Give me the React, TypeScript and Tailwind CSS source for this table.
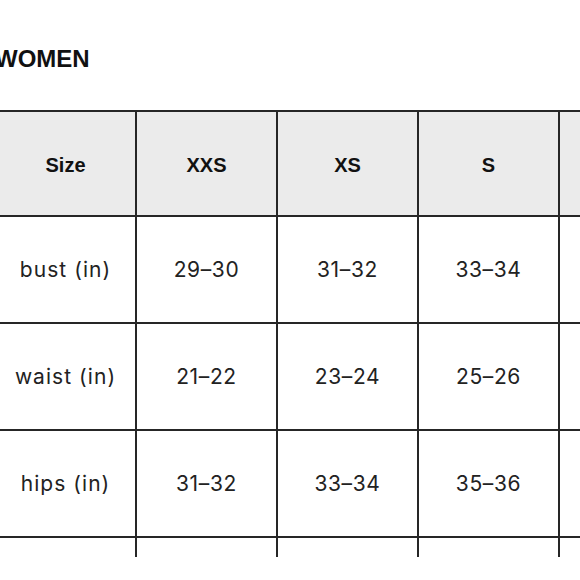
const SIZES = ["XXS", "XS", "S", "M", "L", "XL"];

const ROWS = [
  { label: "bust (in)", values: ["29–30", "31–32", "33–34", "35–36", "37–38", "39–40"] },
  { label: "waist (in)", values: ["21–22", "23–24", "25–26", "27–28", "29–30", "31–32"] },
  { label: "hips (in)", values: ["31–32", "33–34", "35–36", "37–38", "39–40", "41–42"] },
];

function Cell({ children, head }: { children?: React.ReactNode; head?: boolean }) {
  return (
    <div
      className={`w-[141px] shrink-0 h-full flex items-center justify-center border-r-2 border-[#262626] ${
        head ? "bg-[#ebebeb] pt-[3px]" : "bg-white"
      }`}
    >
      {children}
    </div>
  );
}

const headFont = { fontFamily: '"Liberation Sans", Arial, sans-serif', fontWeight: 700 };
const bodyFont = { fontFamily: "Inter, sans-serif" };

export default function App() {
  return (
    <div className="w-[580px] h-[580px] overflow-hidden bg-white">
      <div className="-ml-[4px]">
        <h2
          className="pt-[47px] -ml-[1px] text-[24px] leading-none text-[#111] whitespace-nowrap"
          style={headFont}
        >
          WOMEN
        </h2>

        <div className="mt-[39px] h-[447px] overflow-hidden">
          <div className="flex h-[107px] border-y-2 border-[#262626] w-max">
            <Cell head>
              <span className="text-[20px] text-[#111]" style={headFont}>
                Size
              </span>
            </Cell>
            {SIZES.map((s) => (
              <Cell key={s} head>
                <span className="text-[20px] text-[#111]" style={headFont}>
                  {s}
                </span>
              </Cell>
            ))}
          </div>
          {ROWS.map((row) => (
            <div key={row.label} className="flex h-[107px] border-b-2 border-[#262626] w-max">
              <Cell>
                <span className="text-[21px] text-[#222] tracking-[0.05em]" style={bodyFont}>
                  {row.label}
                </span>
              </Cell>
              {row.values.map((v, i) => (
                <Cell key={i}>
                  <span className="text-[21px] text-[#222] tracking-[0.03em]" style={bodyFont}>
                    {v}
                  </span>
                </Cell>
              ))}
            </div>
          ))}
          <div className="flex h-[107px] w-max">
            <Cell />
            {SIZES.map((s) => (
              <Cell key={s} />
            ))}
          </div>
        </div>
      </div>
    </div>
  );
}
